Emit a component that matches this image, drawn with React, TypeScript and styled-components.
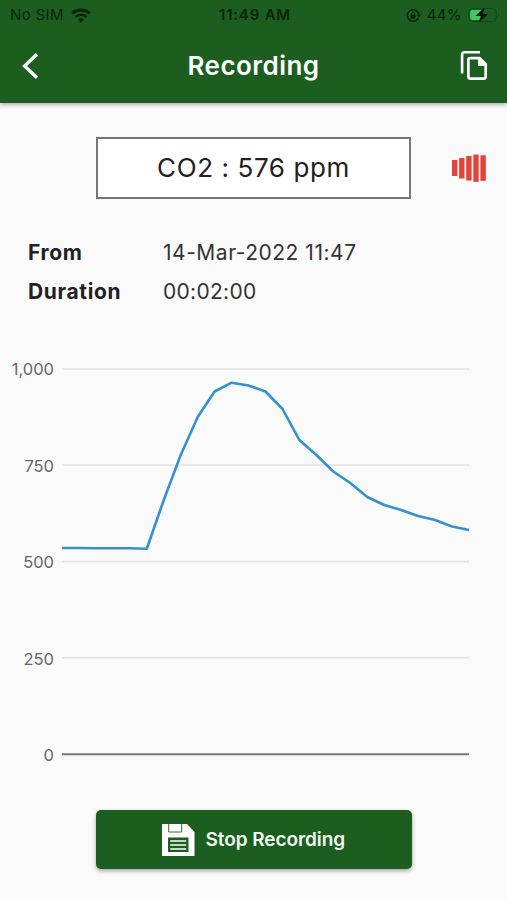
import React from "react";
import styled, { createGlobalStyle } from "styled-components";

const GlobalStyle = createGlobalStyle`
  *, *::before, *::after { box-sizing: border-box; }
  body { margin: 0; background: #fafafa; }
`;

const Screen = styled.div`
  width: 507px;
  height: 900px;
  display: flex;
  flex-direction: column;
  overflow: hidden;
  background: #fafafa;
  color: #212121;
  font-family: Inter, "Liberation Sans", sans-serif;
`;

const Header = styled.header`
  height: 103px;
  flex: none;
  background: #1b5e20;
  box-shadow: 0 1px 5px rgba(0, 0, 0, 0.4);
`;

const StatusBar = styled.div`
  height: 29px;
  display: grid;
  grid-template-columns: 1fr auto 1fr;
  align-items: center;
  padding: 0 7px 0 10px;
  color: #07230a;
  font-size: 15px;
  line-height: 30px;
`;

const StatusGroup = styled.div<{ $end?: boolean }>`
  display: flex;
  align-items: center;
  justify-content: ${(p) => (p.$end ? "flex-end" : "flex-start")};
  gap: ${(p) => (p.$end ? 6 : 7)}px;
`;

const StatusText = styled.span<{ $bold?: boolean; $spacing?: number }>`
  font-weight: ${(p) => (p.$bold ? 600 : 400)};
  letter-spacing: ${(p) => p.$spacing ?? 0}px;
  white-space: nowrap;
`;

const NavBar = styled.div`
  height: 73px;
  display: grid;
  grid-template-columns: 60px 1fr 60px;
  align-items: center;
`;

const IconButton = styled.button`
  display: flex;
  align-items: center;
  justify-content: center;
  height: 73px;
  padding: 0;
  border: 0;
  background: none;
  color: #fff;
`;

const BackButton = styled(IconButton)`
  padding-right: 1px;
`;

const CopyButton = styled(IconButton)`
  padding-right: 6px;
`;

const Title = styled.h1`
  margin: 0;
  text-align: center;
  color: #fff;
  font-size: 26px;
  font-weight: 600;
  line-height: 72px;
  letter-spacing: 0.45px;
`;

const ReadingRow = styled.section`
  display: flex;
  align-items: center;
  margin: 34px 0 0 96px;
  gap: 40px;
`;

const ReadingBox = styled.div`
  width: 315px;
  height: 62px;
  border: 2px solid #777;
  background: #fff;
  text-align: center;
  font-size: 26px;
  line-height: 58px;
  letter-spacing: 0.6px;
`;

const Details = styled.dl`
  display: grid;
  grid-template-columns: 135px 1fr;
  grid-auto-rows: 39px;
  margin: 34px 0 0 28px;
  font-size: 21px;
  line-height: 39px;
`;

const Term = styled.dt`
  font-weight: 700;
  letter-spacing: 0.65px;
`;

const Value = styled.dd<{ $spacing: number }>`
  margin: 0;
  color: #333;
  letter-spacing: ${(p) => p.$spacing}px;
`;

const Chart = styled.section`
  display: flex;
  margin-top: 38px;
  height: 424px;
`;

const AxisLabels = styled.div`
  width: 54px;
  height: 426px;
  display: flex;
  flex-direction: column;
  justify-content: space-between;
  text-align: right;
  color: #666;
  font-size: 16.5px;
  line-height: 40px;
`;

const Plot = styled.svg`
  display: block;
  flex: none;
  margin-left: 8px;
`;

const StopButton = styled.button`
  width: 316px;
  height: 59px;
  flex: none;
  display: flex;
  align-items: center;
  justify-content: center;
  gap: 10.5px;
  margin: 37px 0 0 96px;
  padding: 0 1px 0 0;
  border: 0;
  border-radius: 5px;
  background: #1b5e20;
  box-shadow: 0 2px 4px rgba(0, 0, 0, 0.35);
  color: #f2faf2;
  font-family: inherit;
  font-size: 19px;
  font-weight: 600;
  letter-spacing: -0.06px;
`;

const samples = [
  179, 179, 179.3, 179.3, 179.3, 179.7, 131, 86, 48, 22.5, 13.7, 16.5, 22.5,
  40, 71, 86, 102.5, 114, 128, 136, 141, 147, 151, 157.5, 161,
];
const linePoints = samples
  .map((y, i) => `${((i * 407) / 24).toFixed(1)},${y + 20}`)
  .join(" ");

const WifiIcon = () => (
  <svg width="20" height="15" viewBox="0 0 20 15" fill="none" stroke="currentColor">
    <path d="M1.2 5.6a12.5 12.5 0 0 1 17.6 0" strokeWidth="2.8" />
    <path d="M4.5 9a7.8 7.8 0 0 1 11 0" strokeWidth="2.6" />
    <path d="M10 14.7 6.9 11.5a4.4 4.4 0 0 1 6.2 0Z" fill="currentColor" stroke="none" />
  </svg>
);

const LockIcon = () => (
  <svg width="15" height="15" viewBox="0 0 15 15" fill="none" stroke="currentColor">
    <path d="M12.3 10.2A5.8 5.8 0 1 1 12.8 6" strokeWidth="1.5" />
    <path d="m10.8 6.5 4.2 0-2.1 3Z" fill="currentColor" stroke="none" />
    <rect x="4.5" y="6.8" width="5" height="3.8" rx=".6" fill="currentColor" stroke="none" />
    <path d="M5.6 7V5.6a1.4 1.4 0 0 1 2.8 0V7" />
  </svg>
);

const BatteryIcon = () => (
  <svg width="32" height="18" viewBox="0 0 32 18">
    <rect x=".6" y="2.6" width="27.8" height="13" rx="4" fill="none" stroke="#124818" />
    <path d="M4.5 4h8.5v10H4.5A2.3 2.3 0 0 1 2.2 11.7V6.3A2.3 2.3 0 0 1 4.5 4Z" fill="#42c866" />
    <path d="M30 7c1.6.5 1.6 3.5 0 4Z" fill="#124818" />
    <path d="M16.5 1.5 7.5 10h5.3l-2.5 7L20 8h-5.2Z" fill="#051307" />
  </svg>
);

const BackIcon = () => (
  <svg width="20" height="30" viewBox="0 0 20 30">
    <path d="M17 3.3 4.6 15 17 26.7" fill="none" stroke="currentColor" strokeWidth="3.4" />
  </svg>
);

const CopyIcon = () => (
  <svg width="28" height="32" viewBox="0 0 28 32" fill="none" stroke="currentColor">
    <path d="M20 2.2H4.4a2.3 2.3 0 0 0-2.3 2.3V23.5" strokeWidth="2.6" />
    <path d="M10.2 8.2h9.5l6 6v12.6a1.8 1.8 0 0 1-1.8 1.8H10.2a1.8 1.8 0 0 1-1.8-1.8V10a1.8 1.8 0 0 1 1.8-1.8Z" strokeWidth="2.7" strokeLinejoin="round" />
    <path d="M18 8v8h8Z" fill="currentColor" stroke="none" />
  </svg>
);

const SignalIcon = () => (
  <svg width="36" height="30" viewBox="0 0 36 30" fill="#e34338">
    <rect x="1" y="7" width="5.4" height="16" />
    <rect x="8.1" y="5" width="5.4" height="20.5" />
    <rect x="15.2" y="3" width="5.4" height="24.5" />
    <rect x="22.3" y="1.5" width="5.4" height="27.3" />
    <rect x="29.4" y="2.3" width="5.4" height="25.5" />
  </svg>
);

const SaveIcon = () => (
  <svg width="33" height="34" viewBox="0 0 33 34">
    <path d="M0 1h25l7.5 8v24H0Z" fill="#fff" />
    <path d="M6.7 1v8h13V1" fill="none" stroke="#1b5e20" strokeWidth=".9" />
    <rect x="6" y="14.5" width="20.5" height="14.5" fill="#1b5e20" />
    <path d="M8.2 18h16M8.2 22h16M8.2 26h16" stroke="#fff" strokeWidth="1.4" />
  </svg>
);

export default function App() {
  return (
    <>
      <GlobalStyle />
      <Screen>
        <Header>
          <StatusBar>
            <StatusGroup>
              <StatusText $spacing={0.35}>No SIM</StatusText>
              <WifiIcon />
            </StatusGroup>
            <StatusText $bold $spacing={0.8}>11:49 AM</StatusText>
            <StatusGroup $end>
              <LockIcon />
              <StatusText $spacing={0.4}>44%</StatusText>
              <BatteryIcon />
            </StatusGroup>
          </StatusBar>
          <NavBar>
            <BackButton aria-label="Back"><BackIcon /></BackButton>
            <Title>Recording</Title>
            <CopyButton aria-label="Copy"><CopyIcon /></CopyButton>
          </NavBar>
        </Header>
        <ReadingRow>
          <ReadingBox>CO2 : 576 ppm</ReadingBox>
          <SignalIcon />
        </ReadingRow>
        <Details>
          <Term>From</Term>
          <Value $spacing={0.52}>14-Mar-2022 11:47</Value>
          <Term>Duration</Term>
          <Value $spacing={0.3}>00:02:00</Value>
        </Details>
        <Chart>
          <AxisLabels>
            <span>1,000</span>
            <span>750</span>
            <span>500</span>
            <span>250</span>
            <span>0</span>
          </AxisLabels>
          <Plot width="408" height="424" viewBox="0 0 408 424" fill="none">
            <path d="M0 20H407M0 116H407M0 212.6H407M0 308.8H407" stroke="#e2e2e2" strokeWidth="1.6" />
            <path d="M0 405.3H407" stroke="#777" strokeWidth="2" />
            <polyline points={linePoints} stroke="#3690cf" strokeWidth="2.6" strokeLinejoin="round" />
          </Plot>
        </Chart>
        <StopButton>
          <SaveIcon />
          <span>Stop Recording</span>
        </StopButton>
      </Screen>
    </>
  );
}
